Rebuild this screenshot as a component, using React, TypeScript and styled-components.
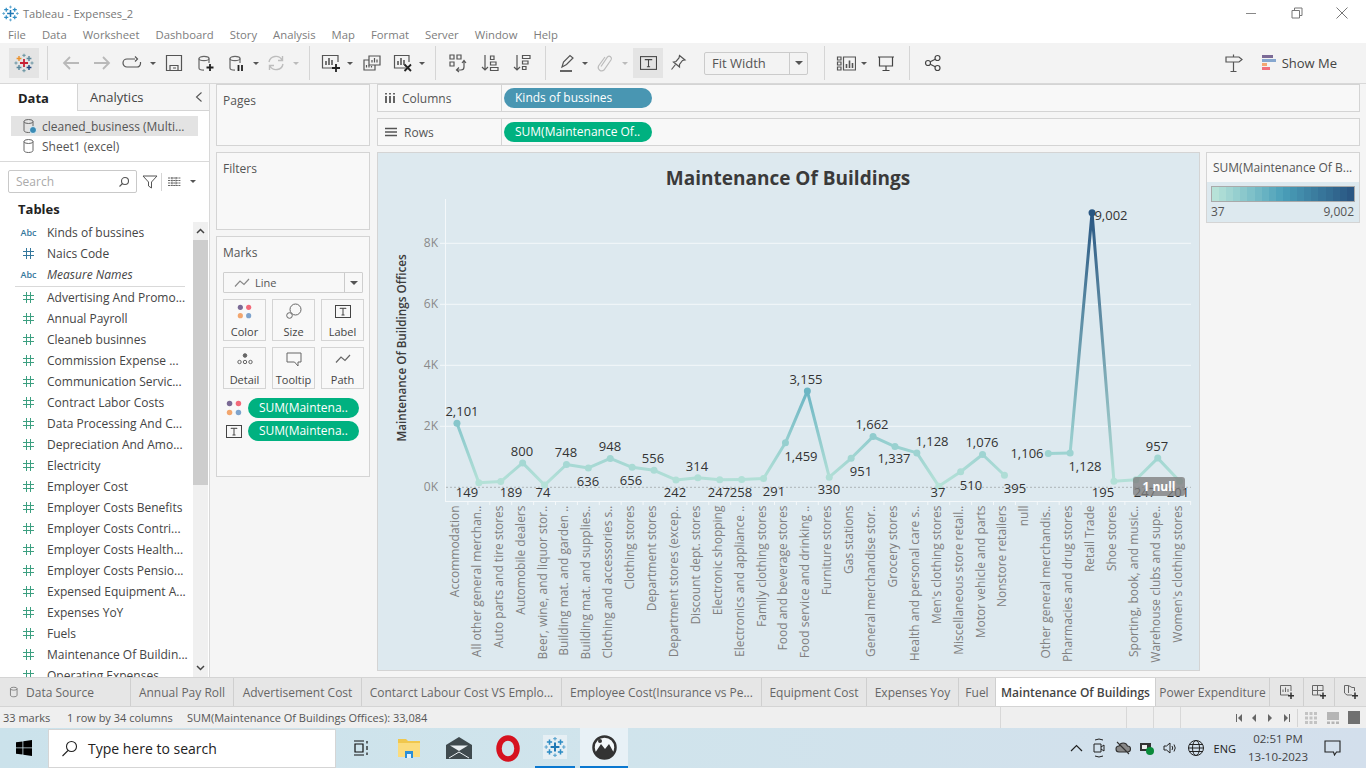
import React from "react";
import styled, { createGlobalStyle } from "styled-components";

const FONT = `"Open Sans", "Liberation Sans", sans-serif`;

const GlobalStyle = createGlobalStyle`
  html, body { margin: 0; padding: 0; background: #fff; }
  * { box-sizing: border-box; }
  body { font-family: ${FONT}; font-size: 12px; color: #444; }
`;

const Screen = styled.div`
  width: 1366px;
  height: 768px;
  display: flex;
  flex-direction: column;
  overflow: hidden;
  background: #f5f5f5;
`;

/* window title + menu */
const TitleBar = styled.div`
  height: 26px;
  background: #fff;
  display: flex;
  align-items: center;
  padding-left: 2px;
`;
const AppName = styled.span`
  margin-left: 4px;
  color: #777;
  font-size: 11.1px;
  white-space: nowrap;
`;
const WinControls = styled.div`
  margin-left: auto;
  display: flex;
  align-items: center;
  padding-right: 17px;
  gap: 30px;
`;
const MenuBar = styled.div`
  height: 17px;
  background: #fff;
  display: flex;
  align-items: center;
  gap: 16px;
  padding-left: 8px;
  color: #7d7d7d;
  font-size: 11.3px;
`;

/* toolbar */
const Toolbar = styled.div`
  height: 41px;
  background: #f3f3f3;
  border-bottom: 1px solid #d8d8d8;
  display: flex;
  align-items: center;
  padding-left: 9px;
`;
const Tool = styled.div<{ $w: number; $on?: boolean; $ml?: number }>`
  width: ${(p) => p.$w}px;
  height: 30px;
  margin-left: ${(p) => p.$ml ?? 0}px;
  flex: none;
  display: flex;
  align-items: center;
  justify-content: center;
  background: ${(p) => (p.$on ? "#e4e4e4" : "transparent")};
`;
const ToolSep = styled.div`
  width: 16px;
  height: 34px;
  flex: none;
  display: flex;
  justify-content: center;
  &::after {
    content: "";
    width: 1px;
    height: 100%;
    background: #d5d5d5;
  }
`;
const Caret = styled.div<{ $w?: number; $dim?: boolean }>`
  width: ${(p) => p.$w ?? 10}px;
  flex: none;
  display: flex;
  justify-content: center;
  &::after {
    content: "";
    border-left: 3px solid transparent;
    border-right: 3px solid transparent;
    border-top: 3px solid ${(p) => (p.$dim ? "#bbb" : "#555")};
  }
`;
const FitSelect = styled.div`
  width: 104px;
  height: 23px;
  margin-left: 12px;
  margin-right: 8px;
  flex: none;
  border: 1px solid #cbcbcb;
  border-radius: 2px;
  display: flex;
  align-items: center;
  font-size: 13px;
  color: #555;
  padding-left: 7px;
`;
const SelectArrow = styled.div`
  margin-left: auto;
  width: 18px;
  height: 100%;
  border-left: 1px solid #cbcbcb;
  display: flex;
  align-items: center;
  justify-content: center;
  &::after {
    content: "";
    border-left: 4px solid transparent;
    border-right: 4px solid transparent;
    border-top: 4px solid #555;
  }
`;
const ShowMe = styled.div`
  display: flex;
  align-items: center;
  gap: 6px;
  margin-left: 13px;
  margin-right: 29px;
  font-size: 13px;
  color: #444;
  white-space: nowrap;
`;
const Spacer = styled.div`
  flex: 1;
`;

/* body */
const Workspace = styled.div`
  height: 593px;
  flex: none;
  display: flex;
  overflow: hidden;
`;
const DataPane = styled.div`
  width: 210px;
  flex: none;
  background: #fff;
  border-right: 1px solid #d8d8d8;
  display: flex;
  flex-direction: column;
  overflow: hidden;
`;
const PaneTabs = styled.div`
  height: 27px;
  flex: none;
  display: flex;
`;
const PaneTab = styled.div<{ $active?: boolean }>`
  width: ${(p) => (p.$active ? "77px" : "132px")};
  display: flex;
  align-items: center;
  padding-left: ${(p) => (p.$active ? "18px" : "12px")};
  font-size: 13px;
  font-weight: ${(p) => (p.$active ? 700 : 400)};
  color: ${(p) => (p.$active ? "#222" : "#444")};
  background: ${(p) => (p.$active ? "#fff" : "#f5f5f5")};
  border-left: ${(p) => (p.$active ? "none" : "1px solid #d4d4d4")};
  border-bottom: ${(p) => (p.$active ? "none" : "1px solid #d4d4d4")};
`;
const Chevron = styled.span`
  margin-left: auto;
  margin-right: 6px;
  display: flex;
`;
const SourceList = styled.div`
  height: 51px;
  flex: none;
  padding: 5px 11px 0;
  border-bottom: 1px solid #d9d9d9;
`;
const SourceRow = styled.div<{ $active?: boolean }>`
  height: 20px;
  display: flex;
  align-items: center;
  gap: 5px;
  padding-left: 11px;
  color: #555;
  font-size: 12px;
  white-space: nowrap;
  background: ${(p) => (p.$active ? "#e3e3e3" : "transparent")};
`;
const SearchRow = styled.div`
  height: 39px;
  flex: none;
  display: flex;
  align-items: center;
  padding: 0 0 0 8px;
`;
const SearchBox = styled.div`
  width: 129px;
  height: 23px;
  margin-right: 5px;
  border: 1px solid #c9c9c9;
  border-radius: 2px;
  display: flex;
  align-items: center;
  justify-content: space-between;
  padding: 0 6px 0 7px;
  color: #aaa;
  font-size: 12px;
`;
const VSep = styled.div<{ $l?: number; $r?: number }>`
  width: 1px;
  height: 18px;
  flex: none;
  background: #d5d5d5;
  margin: 0 ${(p) => p.$r ?? 6}px 0 ${(p) => p.$l ?? 3}px;
`;
const TablesHead = styled.div`
  height: 21px;
  flex: none;
  padding: 0 0 0 18px;
  font-size: 13px;
  font-weight: 700;
  color: #222;
  line-height: 16px;
`;
const FieldScroller = styled.div`
  flex: 1;
  display: flex;
  min-height: 0;
`;
const FieldList = styled.div`
  width: 193px;
  flex: none;
  overflow: hidden;
`;
const FieldRow = styled.div`
  height: 21px;
  display: flex;
  align-items: center;
  padding-left: 15px;
  color: #444;
  font-size: 12px;
  white-space: nowrap;
`;
const FieldKind = styled.span`
  width: 32px;
  flex: none;
  display: flex;
  justify-content: center;
  padding-right: 5px;
`;
const AbcMark = styled.span`
  color: #34779c;
  font-size: 9px;
  font-weight: 600;
`;
const FieldName = styled.span<{ $italic?: boolean }>`
  font-style: ${(p) => (p.$italic ? "italic" : "normal")};
`;
const FieldRule = styled.div`
  height: 1px;
  margin: 1px 8px 0 15px;
  background: #d9d9d9;
`;
const ScrollBar = styled.div`
  width: 15px;
  flex: none;
  background: #f0f0f0;
  display: flex;
  flex-direction: column;
  align-items: center;
`;
const ScrollBtn = styled.div`
  height: 18px;
  flex: none;
  display: flex;
  align-items: center;
`;
const ScrollThumb = styled.div`
  width: 15px;
  height: 245px;
  flex: none;
  background: #cdcdcd;
`;

const CardsColumn = styled.div`
  width: 167px;
  flex: none;
  display: flex;
  flex-direction: column;
  gap: 6px;
  padding: 0 7px 0 6px;
`;
const Card = styled.div<{ $h: number }>`
  height: ${(p) => p.$h}px;
  background: #f8f8f8;
  border: 1px solid #d4d4d4;
  padding: 7px 6px 0;
  flex: none;
`;
const CardTitle = styled.div`
  color: #555;
  font-size: 12px;
  height: 20px;
`;
const MarkSelect = styled.div`
  height: 21px;
  margin-top: 8px;
  border: 1px solid #cfcfcf;
  border-radius: 1px;
  display: flex;
  align-items: center;
  gap: 5px;
  padding-left: 10px;
  color: #555;
  font-size: 11px;
`;
const MarkGrid = styled.div`
  display: grid;
  grid-template-columns: repeat(3, 43px);
  grid-auto-rows: 42px;
  column-gap: 6px;
  row-gap: 6px;
  margin-top: 6px;
`;
const MarkBtn = styled.div`
  border: 1px solid #d4d4d4;
  display: flex;
  flex-direction: column;
  align-items: center;
  justify-content: flex-end;
  padding-bottom: 1px;
  font-size: 11px;
  color: #444;
  gap: 2px;
`;
const MarkIconBox = styled.div`
  height: 22px;
  display: flex;
  align-items: center;
  justify-content: center;
`;
const PillRow = styled.div<{ $first?: boolean }>`
  display: flex;
  align-items: center;
  margin-top: ${(p) => (p.$first ? 9 : 3)}px;
  height: 20px;
`;
const PillIcon = styled.div`
  width: 25px;
  flex: none;
  display: flex;
  justify-content: center;
  padding-right: 3px;
`;
const Pill = styled.div<{ $c: string; $w: number }>`
  width: ${(p) => p.$w}px;
  height: 20px;
  border-radius: 10px;
  background: ${(p) => p.$c};
  color: #fff;
  font-size: 12px;
  line-height: 20px;
  padding-left: 11px;
  white-space: nowrap;
  overflow: hidden;
`;

const ViewColumn = styled.div`
  flex: 1;
  min-width: 0;
  display: flex;
  flex-direction: column;
  gap: 6px;
  padding: 0 6px 0 0;
`;
const Shelf = styled.div`
  height: 28px;
  flex: none;
  background: #f8f8f8;
  border: 1px solid #d4d4d4;
  display: flex;
  align-items: center;
`;
const ShelfLabel = styled.div`
  width: 124px;
  height: 100%;
  flex: none;
  display: flex;
  align-items: center;
  gap: 6px;
  padding-left: 6px;
  border-right: 1px solid #d4d4d4;
  color: #555;
  font-size: 12px;
`;
const ShelfBody = styled.div`
  padding-left: 2px;
`;
const ViewRow = styled.div`
  display: flex;
  gap: 6px;
  flex: none;
`;
const ChartPanel = styled.div`
  width: 823px;
  height: 519px;
  flex: none;
  background: #dde9ef;
  border: 1px solid #d4d4d4;
  overflow: hidden;
  position: relative;
`;
const ChartSvg = styled.svg`
  display: block;
  font-family: ${FONT};
`;
const NullBadge = styled.div`
  position: absolute;
  left: 755px;
  top: 324px;
  width: 52px;
  height: 19px;
  border-radius: 3px;
  background: rgba(125, 125, 125, 0.78);
  color: #fff;
  font-size: 12px;
  font-weight: 700;
  text-align: center;
  line-height: 19px;
`;
const Legend = styled.div`
  width: 154px;
  height: 71px;
  flex: none;
  border: 1px solid #d4d4d4;
  background: #dde9ef;
  display: flex;
  flex-direction: column;
`;
const LegendTitle = styled.div`
  height: 29px;
  flex: none;
  background: #f8f8f8;
  color: #555;
  font-size: 12px;
  line-height: 30px;
  padding-left: 6px;
  white-space: nowrap;
`;
const LegendBar = styled.div`
  height: 16px;
  flex: none;
  margin: 4px 4px 0;
  border: 1px solid #a9a9a9;
  display: flex;
`;
const LegendStep = styled.div`
  flex: 1;
`;
const LegendEnds = styled.div`
  display: flex;
  justify-content: space-between;
  padding: 1px 5px 0 4px;
  color: #555;
  font-size: 12px;
`;

/* sheet tabs + status */
const SheetTabs = styled.div`
  height: 30px;
  flex: none;
  background: #e6e6e6;
  border-top: 1px solid #d4d4d4;
  border-bottom: 1px solid #d4d4d4;
  display: flex;
`;
const SheetTab = styled.div<{ $w: number; $active?: boolean; $start?: boolean }>`
  width: ${(p) => p.$w}px;
  flex: none;
  display: flex;
  align-items: center;
  gap: 6px;
  justify-content: ${(p) => (p.$start ? "flex-start" : "center")};
  padding-left: ${(p) => (p.$start ? 9 : 0)}px;
  border-right: 1px solid #cfcfcf;
  background: ${(p) => (p.$active ? "#fff" : "transparent")};
  color: ${(p) => (p.$active ? "#444" : "#666")};
  font-weight: ${(p) => (p.$active ? 600 : 400)};
  font-size: 12px;
  white-space: nowrap;
`;
const StatusBar = styled.div`
  height: 21px;
  flex: none;
  background: #efefef;
  display: flex;
  align-items: center;
  color: #555;
  font-size: 11px;
  white-space: nowrap;
`;
const StatusText = styled.span<{ $w: number; $pl?: number }>`
  width: ${(p) => p.$w}px;
  padding-left: ${(p) => p.$pl ?? 0}px;
  flex: none;
`;
const StatusCell = styled.div<{ $w: number }>`
  width: ${(p) => p.$w}px;
  height: 100%;
  flex: none;
  border-left: 1px solid #d8d8d8;
`;
const StatusNav = styled.div`
  flex: 1;
  height: 100%;
  display: flex;
  align-items: center;
  border-left: 1px solid #d8d8d8;
  padding-left: 54px;
`;
const NavIcon = styled.svg<{ $ml?: number }>`
  flex: none;
  margin-left: ${(p) => p.$ml ?? 0}px;
`;

/* windows taskbar */
const Taskbar = styled.div`
  height: 40px;
  flex: none;
  background: linear-gradient(90deg, #cbe2eb 0%, #d0e4ec 45%, #d3dfec 100%);
  display: flex;
  align-items: center;
`;
const StartBtn = styled.div`
  width: 48px;
  display: flex;
  justify-content: center;
`;
const SearchField = styled.div`
  width: 288px;
  height: 39px;
  margin-top: 1px;
  background: #fff;
  border: 1px solid #d5d5d5;
  display: flex;
  align-items: center;
  gap: 10px;
  padding-left: 12px;
  font-size: 14px;
  color: #222;
`;
const TaskApp = styled.div<{ $w: number; $on?: boolean; $line?: boolean; $ml?: number }>`
  width: ${(p) => p.$w}px;
  height: 40px;
  margin-left: ${(p) => p.$ml ?? 0}px;
  flex: none;
  display: flex;
  align-items: center;
  justify-content: center;
  background: ${(p) => (p.$on ? "#e8f1f6" : "transparent")};
  border-bottom: ${(p) => (p.$line ? "2px solid #0a78d0" : "none")};
`;
const AppTile = styled.div`
  width: 24px;
  height: 24px;
  background: #e6eff4;
  display: flex;
  align-items: center;
  justify-content: center;
`;
const Tray = styled.div`
  margin-left: auto;
  display: flex;
  align-items: center;
  gap: 9px;
  color: #222;
`;
const TrayLang = styled.span`
  font-size: 11px;
  margin: 0 7px 0 0;
`;
const Clock = styled.div`
  width: 70px;
  text-align: center;
  font-size: 11.5px;
  line-height: 18px;
`;
const NotifyBtn = styled.div`
  width: 53px;
  padding-right: 15px;
  display: flex;
  justify-content: center;
`;

/* drawings */
const PlusMark = ({ x, y, r, c, w = 1.4 }: { x: number; y: number; r: number; c: string; w?: number }) => (
  <path d={`M${x - r} ${y}H${x + r}M${x} ${y - r}V${y + r}`} stroke={c} strokeWidth={w} fill="none" />
);

const TableauLogo = ({ size = 20, colors }: { size?: number; colors: string[] }) => (
  <svg width={size} height={size} viewBox="0 0 20 20">
    <PlusMark x={10} y={10} r={4} c={colors[0]} w={1.8} />
    <PlusMark x={5} y={5.5} r={2.4} c={colors[1]} />
    <PlusMark x={15} y={5.5} r={2.4} c={colors[2]} />
    <PlusMark x={5} y={14.5} r={2.4} c={colors[3]} />
    <PlusMark x={15} y={14.5} r={2.4} c={colors[4]} />
    <PlusMark x={10} y={2.4} r={1.6} c={colors[5]} w={1.1} />
    <PlusMark x={10} y={17.6} r={1.6} c={colors[5]} w={1.1} />
    <PlusMark x={2} y={10} r={1.6} c={colors[5]} w={1.1} />
    <PlusMark x={18} y={10} r={1.6} c={colors[5]} w={1.1} />
  </svg>
);

const Glyph = ({ w = 20, h = 20, c = "#555", sw = 1.2, children }: { w?: number; h?: number; c?: string; sw?: number; children: React.ReactNode }) => (
  <svg width={w} height={h} viewBox={`0 0 ${w} ${h}`} fill="none" stroke={c} strokeWidth={sw}>
    {children}
  </svg>
);

const Cylinder = ({ c = "#666" }: { c?: string }) => (
  <>
    <ellipse cx="7" cy="4.5" rx="5" ry="2.2" stroke={c} />
    <path d="M2 4.5V14c0 1.3 1.8 2.2 5 2.2M12 4.5V9" stroke={c} />
  </>
);

const DataIcon = ({ badge, size = 15 }: { badge?: boolean; size?: number }) => (
  <svg width={size} height={size + 1} viewBox="0 0 15 16" fill="none" stroke="#666">
    <ellipse cx="6.5" cy="3.5" rx="4.5" ry="2" />
    <path d="M2 3.5V12.5c0 1.2 2 2 4.5 2s4.5-.8 4.5-2V3.5" />
    {badge && <circle cx="11" cy="12" r="3.5" fill="#3a8bb5" stroke="#fff" strokeWidth=".8" />}
  </svg>
);

const HashIcon = ({ c = "#3c9f80" }: { c?: string }) => (
  <svg width="11" height="11" viewBox="0 0 11 11" stroke={c} strokeWidth="1">
    <path d="M3.5 0V11M7.5 0V11M0 3.5H11M0 7.5H11" />
  </svg>
);

const Dots = ({ size = 18 }: { size?: number }) => (
  <svg width={size} height={size} viewBox="0 0 18 18">
    <circle cx="4" cy="4" r="3.1" fill="#7a6a95" />
    <circle cx="14" cy="4" r="3.1" fill="#f26a7a" />
    <circle cx="4" cy="14" r="3.1" fill="#f2a66e" />
    <circle cx="14" cy="14" r="3.1" fill="#7ea3cc" />
  </svg>
);

const TBox = ({ w = 16, h = 13 }: { w?: number; h?: number }) => (
  <svg width={w} height={h} viewBox="0 0 16 13" fill="none" stroke="#444">
    <rect x=".5" y=".5" width="15" height="12" />
    <path d="M5 3.8V3.3H11V3.8M8 3.3V10M6.5 10H9.5" />
  </svg>
);

const LineGlyph = ({ c = "#666" }: { c?: string }) => (
  <svg width="16" height="10" viewBox="0 0 16 10" fill="none" stroke={c} strokeWidth="1.2">
    <path d="M1 8.5L6 3L10 6.5L15 1" />
  </svg>
);

/* data */
const POINTS: { name: string; v: number | null; label?: string; lx?: number; ly?: number }[] = [
  { name: "Accommodation", v: 2101, label: "2,101", lx: 462, ly: 411 },
  { name: "All other general merchan..", v: 149, label: "149", lx: 467, ly: 492 },
  { name: "Auto parts and tire stores", v: 189, label: "189", lx: 511, ly: 492 },
  { name: "Automobile dealers", v: 800, label: "800", lx: 522, ly: 451 },
  { name: "Beer, wine, and liquor stor..", v: 74, label: "74", lx: 543, ly: 492 },
  { name: "Building mat. and garden ..", v: 748, label: "748", lx: 566, ly: 452 },
  { name: "Building mat. and supplies..", v: 636, label: "636", lx: 588, ly: 481 },
  { name: "Clothing and accessories s..", v: 948, label: "948", lx: 610, ly: 446 },
  { name: "Clothing stores", v: 656, label: "656", lx: 631, ly: 480 },
  { name: "Department stores", v: 556, label: "556", lx: 653, ly: 458 },
  { name: "Department stores (excep..", v: 242, label: "242", lx: 675, ly: 492 },
  { name: "Discount dept. stores", v: 314, label: "314", lx: 697, ly: 466 },
  { name: "Electronic shopping", v: 247, label: "247", lx: 719, ly: 492 },
  { name: "Electronics and appliance ..", v: 258, label: "258", lx: 741, ly: 492 },
  { name: "Family clothing stores", v: 291, label: "291", lx: 774, ly: 491 },
  { name: "Food and beverage stores", v: 1459, label: "1,459", lx: 801, ly: 456 },
  { name: "Food service and drinking ..", v: 3155, label: "3,155", lx: 806, ly: 379 },
  { name: "Furniture stores", v: 330, label: "330", lx: 829, ly: 489 },
  { name: "Gas stations", v: 951, label: "951", lx: 861, ly: 471 },
  { name: "General merchandise stor..", v: 1662, label: "1,662", lx: 872, ly: 424 },
  { name: "Grocery stores", v: 1337, label: "1,337", lx: 894, ly: 458 },
  { name: "Health and personal care s..", v: 1128, label: "1,128", lx: 932, ly: 441 },
  { name: "Men's clothing stores", v: 37, label: "37", lx: 938, ly: 492 },
  { name: "Miscellaneous store retail..", v: 510, label: "510", lx: 971, ly: 485 },
  { name: "Motor vehicle and parts", v: 1076, label: "1,076", lx: 982, ly: 442 },
  { name: "Nonstore retailers", v: 395, label: "395", lx: 1015, ly: 488 },
  { name: "null", v: null },
  { name: "Other general merchandis..", v: 1106, label: "1,106", lx: 1027, ly: 453 },
  { name: "Pharmacies and drug stores", v: 1128, label: "1,128", lx: 1085, ly: 466 },
  { name: "Retail Trade", v: 9002, label: "9,002", lx: 1111, ly: 215 },
  { name: "Shoe stores", v: 195, label: "195", lx: 1103, ly: 492 },
  { name: "Sporting, book, and music..", v: 247, label: "247", lx: 1145, ly: 492 },
  { name: "Warehouse clubs and supe..", v: 957, label: "957", lx: 1157, ly: 446 },
  { name: "Women's clothing stores", v: 201, label: "201", lx: 1178, ly: 492 },
];

const AXIS_LEFT = 446;
const STEP = 21.9;
const ZERO_Y = 487.3;
const PX_PER_UNIT = 30.5 / 1000;
const px = (i: number) => AXIS_LEFT + STEP * (i + 0.5);
const py = (v: number) => ZERO_Y - v * PX_PER_UNIT;

const hex = (s: string) => [1, 3, 5].map((o) => parseInt(s.slice(o, o + 2), 16));
const RAMP: [number, string][] = [
  [0, "#b7e2d8"],
  [0.2, "#8dcacd"],
  [0.5, "#4a9fb9"],
  [1, "#2a5783"],
];
const rampAt = (t: number) => {
  for (let i = 1; i < RAMP.length; i++) {
    if (t <= RAMP[i][0]) {
      const [t0, c0] = RAMP[i - 1];
      const [t1, c1] = RAMP[i];
      const k = (t - t0) / (t1 - t0);
      const a = hex(c0);
      const b = hex(c1);
      return `rgb(${a.map((x, n) => Math.round(x + (b[n] - x) * k)).join(",")})`;
    }
  }
  return RAMP[RAMP.length - 1][1];
};
const valueColor = (v: number) => rampAt(Math.max(0, (v - 37) / (9002 - 37)));

const LineChart = () => {
  const segments = POINTS.slice(1)
    .map((p, n) => ({ a: POINTS[n], b: p, i: n }))
    .filter((s) => s.a.v !== null && s.b.v !== null);
  return (
    <ChartSvg width={821} height={517} viewBox="378 153 821 517">
      <defs>
        {segments.map((s) => (
          <linearGradient
            key={s.i}
            id={`seg${s.i}`}
            gradientUnits="userSpaceOnUse"
            x1={px(s.i)}
            y1={py(s.a.v as number)}
            x2={px(s.i + 1)}
            y2={py(s.b.v as number)}
          >
            <stop offset="0" stopColor={valueColor(s.a.v as number)} />
            <stop offset="1" stopColor={valueColor(s.b.v as number)} />
          </linearGradient>
        ))}
      </defs>
      <text x="788" y="185" textAnchor="middle" fontSize="19" fontWeight="700" fill="#3a3a3a">
        Maintenance Of Buildings
      </text>
      {[2, 4, 6, 8].map((k) => (
        <g key={k}>
          <line x1={AXIS_LEFT} x2="1191" y1={py(k * 1000)} y2={py(k * 1000)} stroke="#f4f8fa" strokeWidth="1" />
          <line x1="440" x2={AXIS_LEFT} y1={py(k * 1000)} y2={py(k * 1000)} stroke="#f4f8fa" />
          <text x="438" y={py(k * 1000) + 4} textAnchor="end" fontSize="12" fill="#8a8a8a">
            {k}K
          </text>
        </g>
      ))}
      <text x="438" y={ZERO_Y + 4} textAnchor="end" fontSize="12" fill="#8a8a8a">
        0K
      </text>
      <line x1={AXIS_LEFT} x2="1191" y1={ZERO_Y} y2={ZERO_Y} stroke="#aeb4b7" strokeDasharray="2 2" />
      <line x1="445.5" x2="445.5" y1="199" y2="501" stroke="#f4f8fa" />
      <line x1="445" x2="1191" y1="501.5" y2="501.5" stroke="#f4f8fa" />
      {POINTS.map((_, i) => (
        <line key={i} x1={AXIS_LEFT + STEP * (i + 1)} x2={AXIS_LEFT + STEP * (i + 1)} y1="501" y2="505" stroke="#f4f8fa" />
      ))}
      <text
        transform="translate(406 348) rotate(-90)"
        textAnchor="middle"
        fontSize="11.7"
        fontWeight="600"
        fill="#3c3c3c"
      >
        Maintenance Of Buildings Offices
      </text>
      {segments.map((s) => (
        <line
          key={s.i}
          x1={px(s.i)}
          y1={py(s.a.v as number)}
          x2={px(s.i + 1)}
          y2={py(s.b.v as number)}
          stroke={`url(#seg${s.i})`}
          strokeWidth="3"
          strokeLinecap="round"
        />
      ))}
      {POINTS.map((p, i) =>
        p.v === null ? null : <circle key={i} cx={px(i)} cy={py(p.v)} r="3.5" fill={valueColor(p.v)} />
      )}
      {POINTS.map((p, i) => (
        <text
          key={p.name}
          transform={`translate(${px(i) + 2} 505.5) rotate(-90)`}
          textAnchor="end"
          fontSize="12"
          fill="#808080"
        >
          {p.name}
        </text>
      ))}
      {POINTS.map((p) =>
        p.label ? (
          <text key={p.name} x={p.lx} y={(p.ly as number) + 4.5} textAnchor="middle" fontSize="13" fill="#333">
            {p.label}
          </text>
        ) : null
      )}
    </ChartSvg>
  );
};

const FIELDS: { name: string; kind: "abc" | "dim" | "mea"; italic?: boolean }[] = [
  { name: "Kinds of bussines", kind: "abc" },
  { name: "Naics Code", kind: "dim" },
  { name: "Measure Names", kind: "abc", italic: true },
  { name: "Advertising And Promo...", kind: "mea" },
  { name: "Annual Payroll", kind: "mea" },
  { name: "Cleaneb businnes", kind: "mea" },
  { name: "Commission Expense ...", kind: "mea" },
  { name: "Communication Servic...", kind: "mea" },
  { name: "Contract Labor Costs", kind: "mea" },
  { name: "Data Processing And C...", kind: "mea" },
  { name: "Depreciation And Amo...", kind: "mea" },
  { name: "Electricity", kind: "mea" },
  { name: "Employer Cost", kind: "mea" },
  { name: "Employer Costs Benefits", kind: "mea" },
  { name: "Employer Costs Contri...", kind: "mea" },
  { name: "Employer Costs Health...", kind: "mea" },
  { name: "Employer Costs Pensio...", kind: "mea" },
  { name: "Expensed Equipment A...", kind: "mea" },
  { name: "Expenses YoY", kind: "mea" },
  { name: "Fuels", kind: "mea" },
  { name: "Maintenance Of Buildin...", kind: "mea" },
  { name: "Operating Expenses", kind: "mea" },
];

const SHEETS: { name: string; w: number; active?: boolean }[] = [
  { name: "Annual Pay Roll", w: 103 },
  { name: "Advertisement Cost", w: 128 },
  { name: "Contarct Labour Cost VS Emplo...", w: 200 },
  { name: "Employee  Cost(Insurance vs Pe...", w: 200 },
  { name: "Equipment Cost", w: 105 },
  { name: "Expenses Yoy", w: 92 },
  { name: "Fuel", w: 37 },
  { name: "Maintenance Of Buildings", w: 160, active: true },
  { name: "Power Expenditure", w: 114 },
];

const LEGEND_STEPS = Array.from({ length: 20 }, (_, i) => rampAt(i / 19));

const LOGO_COLORS = ["#c72035", "#eb912b", "#5b879b", "#59879b", "#1f457e", "#7099a6"];
const WIN_LOGO_COLORS = ["#1f77b4", "#2d8cc4", "#2d8cc4", "#2d8cc4", "#2d8cc4", "#5ea6cf"];

const App = () => {
  return (
    <Screen>
      <GlobalStyle />
      <TitleBar>
        <TableauLogo size={17} colors={WIN_LOGO_COLORS} />
        <AppName>Tableau - Expenses_2</AppName>
        <WinControls>
          <Glyph w={16} h={12} c="#888" sw={1}>
            <path d="M3 6.5H13" />
          </Glyph>
          <Glyph w={16} h={12} c="#777" sw={1}>
            <path d="M5.5 3V1H13V8.5H10.5M3 3.5H10.5V11H3Z" />
          </Glyph>
          <Glyph w={14} h={14} c="#777" sw={1}>
            <path d="M1.5 1.5L12.5 12.5M12.5 1.5L1.5 12.5" />
          </Glyph>
        </WinControls>
      </TitleBar>
      <MenuBar>
        {["File", "Data", "Worksheet", "Dashboard", "Story", "Analysis", "Map", "Format", "Server", "Window", "Help"].map((m) => (
          <span key={m}>{m}</span>
        ))}
      </MenuBar>
      <Toolbar>
        <Tool $w={30} $on>
          <TableauLogo colors={LOGO_COLORS} />
        </Tool>
        <ToolSep />
        <Tool $w={31}>
          <Glyph c="#b9b9b9" sw={1.8}>
            <path d="M18 10H3M9 4L3 10L9 16" />
          </Glyph>
        </Tool>
        <Tool $w={31}>
          <Glyph c="#b9b9b9" sw={1.8}>
            <path d="M2 10H17M11 4L17 10L11 16" />
          </Glyph>
        </Tool>
        <Tool $w={30}>
          <Glyph>
            <path d="M13 6H5a3.5 3.5 0 0 0 0 8H15a3.5 3.5 0 0 0 3.5-3.5V9" />
            <path d="M13 3.5L15.5 6L13 8.5" />
          </Glyph>
        </Tool>
        <Caret $w={11} />
        <Tool $w={32}>
          <Glyph w={18} h={18} c="#555">
            <path d="M1.5 1.5H16.5V16.5H1.5ZM5 16.5V11.5H13V16.5M8 14H11" />
          </Glyph>
        </Tool>
        <Tool $w={32}>
          <Glyph w={18} h={18}>
            <Cylinder />
            <path d="M13 10V17M9.5 13.5H16.5" stroke="#222" strokeWidth="1.8" />
          </Glyph>
        </Tool>
        <Tool $w={29}>
          <Glyph w={18} h={18}>
            <Cylinder />
            <path d="M10.5 11V17M14 11V17" stroke="#222" strokeWidth="1.8" />
          </Glyph>
        </Tool>
        <Caret />
        <Tool $w={30}>
          <Glyph c="#bdbdbd" sw={1.4}>
            <path d="M3 9a7 7 0 0 1 13-2M17 11a7 7 0 0 1-13 2M16.5 3V7.5H12M3.5 17V12.5H8" />
          </Glyph>
        </Tool>
        <Caret $dim />
        <ToolSep />
        <Tool $w={28}>
          <Glyph w={20} h={20}>
            <path d="M14 15H1.5V2.5H17V9" />
            <path d="M5 12V8M8 12V5M11 12V7" strokeWidth="1.6" />
            <path d="M15 11V19M11 15H19" stroke="#222" strokeWidth="1.8" />
          </Glyph>
        </Tool>
        <Caret />
        <Tool $w={33}>
          <Glyph>
            <path d="M7 3H18V12H7ZM10 9.5V7M12.5 9.5V5M15 9.5V6.5" />
            <path d="M7 7H2V17H13V12M4.5 14.5V12M7 14.5V12M9.5 14.5V13" />
          </Glyph>
        </Tool>
        <Tool $w={29}>
          <Glyph>
            <path d="M13 15H1.5V2.5H16V9" />
            <path d="M5 12V8M8 12V5M11 12V7" strokeWidth="1.6" />
            <path d="M11.5 11.5L18 18M18 11.5L11.5 18" stroke="#222" strokeWidth="1.8" />
          </Glyph>
        </Tool>
        <Caret />
        <ToolSep />
        <Tool $w={30}>
          <Glyph>
            <path d="M2 2H6V6H2ZM9 2H13V6H9ZM2 9H6V13H2Z" />
            <path d="M16 8V14a3 3 0 0 1-3 3H9M11 14.5L8.5 17L11 19M14 10L16 7.5L18 10" />
          </Glyph>
        </Tool>
        <Tool $w={33}>
          <Glyph>
            <path d="M5 2V17M2 14L5 17L8 14" />
            <path d="M10.5 3H14V6.5H10.5ZM10.5 9H16V12H10.5ZM10.5 14.5H18V17.5H10.5Z" />
          </Glyph>
        </Tool>
        <Tool $w={31}>
          <Glyph>
            <path d="M5 2V17M2 14L5 17L8 14" />
            <path d="M10.5 2.5H18V5.5H10.5ZM10.5 8H16V11H10.5ZM10.5 13.5H14V16.5H10.5Z" />
          </Glyph>
        </Tool>
        <ToolSep />
        <Tool $w={27}>
          <Glyph>
            <path d="M5 14L6.5 9L13 2.5L16 5L9.5 11.5L5 14Z" />
            <path d="M3 18H15" strokeWidth="1.8" />
          </Glyph>
        </Tool>
        <Caret />
        <Tool $w={30}>
          <Glyph c="#bcbcbc">
            <path d="M6 13.5L12.5 4a2.3 2.3 0 0 1 3.6 2.8L9 17a3.5 3.5 0 0 1-5.5-4L10 4" />
          </Glyph>
        </Tool>
        <Caret $dim />
        <Tool $w={30} $on $ml={3}>
          <TBox w={17} h={14} />
        </Tool>
        <Tool $w={29}>
          <Glyph w={18} h={18}>
            <path d="M10.5 1.5L16 6L13.5 6.5L10.5 10.5L10.5 13L4.5 8L7 7.5L10 4Z" />
            <path d="M6.5 10.5L2.5 15.5" />
          </Glyph>
        </Tool>
        <FitSelect>
          Fit Width
          <SelectArrow />
        </FitSelect>
        <ToolSep />
        <Tool $w={27}>
          <Glyph>
            <path d="M1.5 4H5V7H1.5ZM1.5 9H5V12H1.5ZM1.5 14H5V17H1.5ZM7.5 4H19.5V17H7.5Z" />
            <path d="M10.5 15V11M13.5 15V7.5M16.5 15V10" strokeWidth="1.6" />
          </Glyph>
        </Tool>
        <Caret />
        <Tool $w={30} $ml={2}>
          <Glyph w={18} h={18} c="#444">
            <path d="M1 3H17M2.5 3V12H15.5V3M9 12V16M5.5 16.5H12.5" />
          </Glyph>
        </Tool>
        <ToolSep />
        <Tool $w={31}>
          <Glyph w={18} h={18} c="#444">
            <circle cx="4" cy="9" r="2.5" />
            <circle cx="13.5" cy="4" r="2.5" />
            <circle cx="13.5" cy="14" r="2.5" />
            <path d="M6.2 7.8L11.3 5.2M6.2 10.2L11.3 12.8" />
          </Glyph>
        </Tool>
        <Spacer />
        <Tool $w={29}>
          <Glyph w={20} h={20}>
            <path d="M2 4H15L18 6.5L15 9H2ZM9.5 1.5V4M9.5 9V18.5M6.5 18.5H12.5" />
          </Glyph>
        </Tool>
        <ShowMe>
          <svg width="14" height="16" viewBox="0 0 14 16">
            <rect x="0" y="0" width="11" height="3" fill="#7b6a96" />
            <rect x="0" y="4" width="14" height="3" fill="#86a7cf" />
            <rect x="0" y="8" width="5" height="3" fill="#f4a772" />
            <rect x="0" y="12" width="8" height="3" fill="#f2707d" />
          </svg>
          Show Me
        </ShowMe>
      </Toolbar>
      <Workspace>
        <DataPane>
          <PaneTabs>
            <PaneTab $active>Data</PaneTab>
            <PaneTab>
              Analytics
              <Chevron>
                <Glyph w={8} h={12} c="#555" sw={1.1}>
                  <path d="M6.5 1.5L1.5 6L6.5 10.5" />
                </Glyph>
              </Chevron>
            </PaneTab>
          </PaneTabs>
          <SourceList>
            <SourceRow $active>
              <DataIcon badge />
              cleaned_business (Multi...
            </SourceRow>
            <SourceRow>
              <DataIcon />
              Sheet1 (excel)
            </SourceRow>
          </SourceList>
          <SearchRow>
            <SearchBox>
              Search
              <Glyph w={12} h={12} c="#555" sw={1.1}>
                <circle cx="7" cy="5" r="3.5" />
                <path d="M4.5 7.5L1.5 10.5" />
              </Glyph>
            </SearchBox>
            <Glyph w={16} h={14} c="#555" sw={1}>
              <path d="M1 1H15L9.5 7V13L6.5 11V7Z" />
            </Glyph>
            <VSep />
            <Glyph w={13} h={10} c="#666" sw={1}>
              <path d="M0 1H13M0 3.5H13M0 6H13M0 8.5H13M4 0V9M8 0V9" strokeDasharray="2 .6" />
            </Glyph>
            <Caret $w={23} />
          </SearchRow>
          <TablesHead>Tables</TablesHead>
          <FieldScroller>
            <FieldList>
              {FIELDS.map((f, i) => (
                <React.Fragment key={f.name}>
                  <FieldRow>
                    <FieldKind>
                      {f.kind === "abc" ? <AbcMark>Abc</AbcMark> : <HashIcon c={f.kind === "dim" ? "#34779c" : "#3c9f80"} />}
                    </FieldKind>
                    <FieldName $italic={f.italic}>{f.name}</FieldName>
                  </FieldRow>
                  {i === 2 && <FieldRule />}
                </React.Fragment>
              ))}
            </FieldList>
            <ScrollBar>
              <ScrollBtn>
                <Glyph w={9} h={6} c="#444" sw={1.5}>
                  <path d="M1 5L4.5 1.5L8 5" />
                </Glyph>
              </ScrollBtn>
              <ScrollThumb />
              <Spacer />
              <ScrollBtn>
                <Glyph w={9} h={6} c="#444" sw={1.5}>
                  <path d="M1 1L4.5 4.5L8 1" />
                </Glyph>
              </ScrollBtn>
            </ScrollBar>
          </FieldScroller>
        </DataPane>
        <CardsColumn>
          <Card $h={62}>
            <CardTitle>Pages</CardTitle>
          </Card>
          <Card $h={78}>
            <CardTitle>Filters</CardTitle>
          </Card>
          <Card $h={241}>
            <CardTitle>Marks</CardTitle>
            <MarkSelect>
              <LineGlyph c="#888" />
              Line
              <SelectArrow />
            </MarkSelect>
            <MarkGrid>
              <MarkBtn>
                <MarkIconBox>
                  <Dots size={15} />
                </MarkIconBox>
                Color
              </MarkBtn>
              <MarkBtn>
                <MarkIconBox>
                  <Glyph w={16} h={16} c="#666" sw={1}>
                    <circle cx="9.5" cy="6.5" r="5.5" />
                    <circle cx="3.5" cy="12.5" r="2.8" fill="#f8f8f8" />
                  </Glyph>
                </MarkIconBox>
                Size
              </MarkBtn>
              <MarkBtn>
                <MarkIconBox>
                  <TBox />
                </MarkIconBox>
                Label
              </MarkBtn>
              <MarkBtn>
                <MarkIconBox>
                  <Glyph w={16} h={12} c="#666" sw={1}>
                    <circle cx="8" cy="2.5" r="1.8" fill="#666" />
                    <circle cx="2.5" cy="9" r="1.7" />
                    <circle cx="8" cy="9" r="1.7" />
                    <circle cx="13.5" cy="9" r="1.7" />
                  </Glyph>
                </MarkIconBox>
                Detail
              </MarkBtn>
              <MarkBtn>
                <MarkIconBox>
                  <Glyph w={16} h={15} c="#666" sw={1}>
                    <path d="M1 1H15V10H12V14L8.5 10H1Z" />
                  </Glyph>
                </MarkIconBox>
                Tooltip
              </MarkBtn>
              <MarkBtn>
                <MarkIconBox>
                  <LineGlyph />
                </MarkIconBox>
                Path
              </MarkBtn>
            </MarkGrid>
            <PillRow $first>
              <PillIcon>
                <Dots size={16} />
              </PillIcon>
              <Pill $c="#00b180" $w={111}>
                SUM(Maintena..
              </Pill>
            </PillRow>
            <PillRow>
              <PillIcon>
                <TBox />
              </PillIcon>
              <Pill $c="#00b180" $w={111}>
                SUM(Maintena..
              </Pill>
            </PillRow>
          </Card>
        </CardsColumn>
        <ViewColumn>
          <Shelf>
            <ShelfLabel>
              <Glyph w={12} h={12} c="#555" sw={1.8}>
                <path d="M2 4V11M6 4V11M10 4V11M2 1V2.5M6 1V2.5M10 1V2.5" />
              </Glyph>
              Columns
            </ShelfLabel>
            <ShelfBody>
              <Pill $c="#4996b2" $w={148}>
                Kinds of bussines
              </Pill>
            </ShelfBody>
          </Shelf>
          <Shelf>
            <ShelfLabel>
              <Glyph w={14} h={12} c="#555" sw={1.5}>
                <path d="M1 2.5H13M1 6H13M1 9.5H13" />
              </Glyph>
              Rows
            </ShelfLabel>
            <ShelfBody>
              <Pill $c="#00b180" $w={148}>
                SUM(Maintenance Of..
              </Pill>
            </ShelfBody>
          </Shelf>
          <ViewRow>
            <ChartPanel>
              <LineChart />
              <NullBadge>1 null</NullBadge>
            </ChartPanel>
            <Legend>
              <LegendTitle>SUM(Maintenance Of B...</LegendTitle>
              <LegendBar>
                {LEGEND_STEPS.map((c) => (
                  <LegendStep key={c} style={{ background: c }} />
                ))}
              </LegendBar>
              <LegendEnds>
                <span>37</span>
                <span>9,002</span>
              </LegendEnds>
            </Legend>
          </ViewRow>
        </ViewColumn>
      </Workspace>
      <SheetTabs>
        <SheetTab $w={131} $start>
          <DataIcon size={11} />
          Data Source
        </SheetTab>
        {SHEETS.map((s) => (
          <SheetTab key={s.name} $w={s.w} $active={s.active}>
            {s.name}
          </SheetTab>
        ))}
        <SheetTab $w={34}>
          <Glyph w={16} h={16} c="#666" sw={1}>
            <path d="M10 11H1.5V1.5H12V7M4 8V5.5M6.5 8V3.5M9 8V5" />
            <path d="M12 8.5V15M9 11.8H15" stroke="#333" strokeWidth="1.5" />
          </Glyph>
        </SheetTab>
        <SheetTab $w={31}>
          <Glyph w={16} h={16} c="#666" sw={1}>
            <path d="M10 11H1.5V1.5H12V7M6.5 1.5V11M1.5 6.5H12" />
            <path d="M12 8.5V15M9 11.8H15" stroke="#333" strokeWidth="1.5" />
          </Glyph>
        </SheetTab>
        <SheetTab $w={33}>
          <Glyph w={16} h={16} c="#666" sw={1}>
            <path d="M9 11H4L1.5 9V1.5H5.5L9 3.5H11.5V7M5.5 1.5V9" />
            <path d="M12 8.5V15M9 11.8H15" stroke="#333" strokeWidth="1.5" />
          </Glyph>
        </SheetTab>
      </SheetTabs>
      <StatusBar>
        <StatusText $w={67} $pl={3}>
          33 marks
        </StatusText>
        <StatusText $w={120}>1 row by 34 columns</StatusText>
        <StatusText $w={813}>SUM(Maintenance Of Buildings Offices): 33,084</StatusText>
        <StatusCell $w={126} />
        <StatusCell $w={27} />
        <StatusCell $w={27} />
        <StatusNav>
          <svg width="56" height="10" viewBox="0 0 56 10" fill="#666">
            <path d="M1 1h1v8H1zM7 1v8L3 5zM21 1v8l-4-4zM33 1v8l4-4zM49 1v8l4-4zM54 1h1v8h-1z" />
          </svg>
          <VSep $l={6} $r={7} />
          <NavIcon width="12" height="12" viewBox="0 0 12 12" fill="#c3c3c3">
            <path d="M0 0h3v3H0zM4.5 0h3v3h-3zM9 0h3v3H9zM0 4.5h3v3H0zM4.5 4.5h3v3h-3zM9 4.5h3v3H9zM0 9h3v3H0zM4.5 9h3v3h-3zM9 9h3v3H9z" />
          </NavIcon>
          <NavIcon $ml={10} width="12" height="12" viewBox="0 0 12 12" fill="#b5b5b5">
            <path d="M0 0h12v8H0zM0 9.5h3V12H0zM4.5 9.5h3V12h-3zM9 9.5h3V12H9z" />
          </NavIcon>
          <NavIcon $ml={9} width="12" height="13" viewBox="0 0 12 13" fill="#707070">
            <path d="M0 0h12v13H0z" />
          </NavIcon>
        </StatusNav>
      </StatusBar>
      <Taskbar>
        <StartBtn>
          <svg width="16" height="16" viewBox="0 0 16 16" fill="#000">
            <path d="M0 2.3L6.5 1.4V7.500H0zM7.300 1.300L16 0V7.500H7.300zM0 8.300H6.500V14.600L0 13.700zM7.300 8.300H16V16L7.300 14.700z" />
          </svg>
        </StartBtn>
        <SearchField>
          <Glyph w={17} h={17} c="#222" sw={1.1}>
            <circle cx="10.5" cy="6.5" r="5" />
            <path d="M7 10.5L1.5 16" />
          </Glyph>
          Type here to search
        </SearchField>
        <TaskApp $w={47} $ml={1}>
          <Glyph w={18} h={16} c="#111" sw={1.2}>
            <path d="M2 1H12M2 15H12M3 4H11V12H3ZM15 1V3.5M15 6V10M15 12.5V15" />
          </Glyph>
        </TaskApp>
        <TaskApp $w={50}>
          <svg width="24" height="22" viewBox="0 0 24 22">
            <path d="M1 2H9L11 4H23V20H1Z" fill="#f0c74d" />
            <path d="M1 6H23V20H1Z" fill="#fbdc7d" />
            <path d="M8 14H16V21H8Z" fill="#2b8fd8" />
            <path d="M10 17H14V21H10Z" fill="#e5f1fa" />
          </svg>
        </TaskApp>
        <TaskApp $w={50}>
          <svg width="26" height="22" viewBox="0 0 26 22">
            <path d="M13 0L26 8V22H0V8Z" fill="#3f4a4e" />
            <path d="M4 8.5H22L13 14Z" fill="#e8eef1" />
            <path d="M3 21L13 15L23 21" fill="none" stroke="#e8eef1" strokeWidth="1" />
          </svg>
        </TaskApp>
        <TaskApp $w={48}>
          <svg width="24" height="27" viewBox="0 0 24 27">
            <ellipse cx="12" cy="13.5" rx="9" ry="10.5" fill="none" stroke="#d6121f" strokeWidth="5.5" />
          </svg>
        </TaskApp>
        <TaskApp $w={40} $line $ml={3}>
          <AppTile>
            <TableauLogo size={22} colors={WIN_LOGO_COLORS} />
          </AppTile>
        </TaskApp>
        <TaskApp $w={48} $on $line $ml={5}>
          <svg width="25" height="25" viewBox="0 0 25 25">
            <circle cx="12.5" cy="12.5" r="11" fill="#f4f8fa" stroke="#333" strokeWidth="2.5" />
            <path d="M3 18L9 9L13 14L17 9L22 18A11 11 0 0 1 3 18Z" fill="#333" />
            <circle cx="8" cy="6" r="2" fill="#333" />
          </svg>
        </TaskApp>
        <Tray>
          <Glyph w={13} h={8} c="#222" sw={1.2}>
            <path d="M1 7L6.5 1.500L12 7" />
          </Glyph>
          <Glyph w={14} h={20} c="#222" sw={1}>
            <path d="M3 2Q7 0 11 2M3 18Q7 20 11 18M2 6H9V14H2ZM9 9L12 7V13L9 11" />
          </Glyph>
          <Glyph w={16} h={16} c="#333" sw={1.1}>
            <path d="M4 12a3 3 0 0 1 0-6 4.5 4.5 0 0 1 8.500 0 3 3 0 0 1 0 6ZM2 2L14 14" fill="#888" />
          </Glyph>
          <svg width="14" height="14" viewBox="0 0 14 14">
            <rect x="0" y="2" width="11" height="8" fill="#333" />
            <rect x="2" y="4" width="5" height="4" fill="#eee" />
            <circle cx="10" cy="10" r="4" fill="#0a8a3a" />
          </svg>
          <Glyph w={15} h={14} c="#222" sw={1}>
            <path d="M1 5H3.5L7 2V12L3.5 9H1ZM9 5Q10.5 7 9 9M11 3.5Q13.5 7 11 10.5" />
          </Glyph>
          <Glyph w={18} h={18} c="#222" sw={1}>
            <circle cx="9" cy="9" r="7.5" />
            <ellipse cx="9" cy="9" rx="3.5" ry="7.5" />
            <path d="M1.5 9H16.5M2.5 5.5H15.5M2.5 12.5H15.5" />
          </Glyph>
          <TrayLang>ENG</TrayLang>
        </Tray>
        <Clock>
          02:51 PM
          <br />
          13-10-2023
        </Clock>
        <NotifyBtn>
          <Glyph w={17} h={16} c="#222" sw={1.1}>
            <path d="M1 1H16V12H12.5L10.5 15L9.5 12H1Z" />
          </Glyph>
        </NotifyBtn>
      </Taskbar>
    </Screen>
  );
};

export default App;
